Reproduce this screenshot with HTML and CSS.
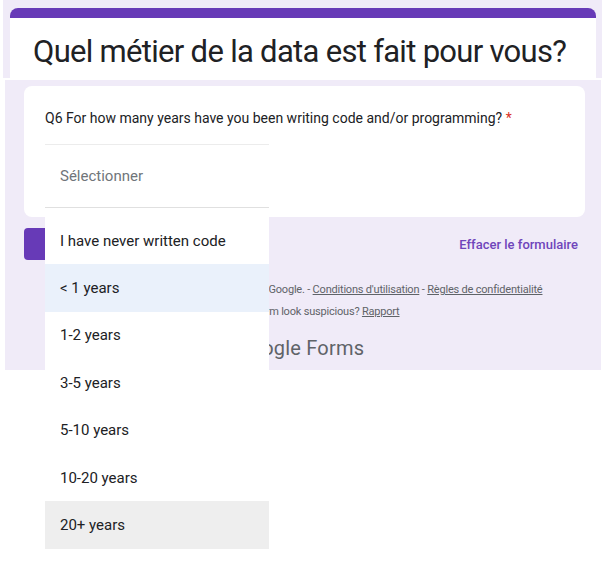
FILE: index.html
```html
<!DOCTYPE html>
<html lang="fr">
<head>
<meta charset="utf-8">
<title>Quel métier de la data est fait pour vous?</title>
<link rel="stylesheet" href="styles.css">
</head>
<body>
<div class="shot">
  <header class="head">
    <div class="title-card">
      <h1 class="title">Quel métier de la data est fait pour vous?</h1>
    </div>
  </header>
  <main class="main">
    <section class="q-card">
      <p class="q-text">Q6 For how many years have you been writing code and/or programming? <span class="req">*</span></p>
    </section>
    <div class="actions">
      <button class="submit" type="button">Envoyer</button>
      <a class="clear">Effacer le formulaire</a>
    </div>
    <footer class="foot">
      <p class="foot-line">Ce contenu n'est ni rédigé, ni cautionné par Google. - <a>Conditions d'utilisation</a> - <a>Règles de confidentialité</a></p>
      <p class="foot-line">Does this form look suspicious? <a>Rapport</a></p>
      <p class="logo">Google Forms</p>
    </footer>
    <div class="dropdown">
      <div class="select-field">Sélectionner</div>
      <ul class="menu">
        <li class="opt">I have never written code</li>
        <li class="opt opt-hover">&lt; 1 years</li>
        <li class="opt">1-2 years</li>
        <li class="opt">3-5 years</li>
        <li class="opt">5-10 years</li>
        <li class="opt">10-20 years</li>
        <li class="opt opt-sel">20+ years</li>
      </ul>
    </div>
  </main>
</div>
</body>
</html>
```
FILE: styles.css
```css
* { box-sizing: border-box; }
html, body { margin: 0; padding: 0; background: #ffffff; }
body { font-family: Roboto, "Liberation Sans", sans-serif; color: #202124; }

.shot { width: 605px; height: 569px; }

.head {
  margin-left: 3px;
  width: 599px;
  height: 78px;
  background: #f0ebf8;
  padding: 8px 6px 0 7px;
}
.title-card {
  height: 70px;
  background: #ffffff;
  border-top: 10px solid #673ab7;
  border-radius: 8px 8px 0 0;
  padding: 16px 0 0 23px;
}
.title {
  margin: 0;
  font-weight: 400;
  font-size: 31px;
  line-height: 36px;
  letter-spacing: -0.7px;
  color: #202124;
  white-space: nowrap;
}

.main {
  position: relative;
  margin-top: 2px;
  margin-left: 5px;
  width: 596px;
  height: 290px;
  background: #f0ebf8;
  padding: 6px 16px 0 19px;
}
.q-card {
  background: #ffffff;
  border-radius: 8px;
  height: 131px;
  padding: 23px 0 0 21px;
}
.q-text {
  margin: 0;
  font-size: 14px;
  line-height: 18px;
  color: #202124;
}
.req { color: #d93025; }

.actions {
  display: flex;
  justify-content: space-between;
  align-items: center;
  margin-top: 11px;
  height: 32px;
}
.submit {
  width: 96px;
  height: 32px;
  border: 0;
  border-radius: 4px;
  background: #673ab7;
  color: #ffffff;
  padding: 0 0 0 30px;
  text-align: left;
  font: 500 14px Roboto, sans-serif;
}
.clear {
  font-size: 13px;
  font-weight: 500;
  color: #6f45bb;
  padding-right: 7px;
}

.foot {
  margin-top: 22px;
  text-align: center;
  color: #5f6368;
}
.foot-line {
  margin: 0 0 6px;
  font-size: 11px;
  line-height: 16px;
  letter-spacing: -0.2px;
}
.foot-line a { color: #5f6368; text-decoration: underline; }
.logo {
  margin: 16px 0 0;
  padding-right: 8px;
  font-size: 20px;
  line-height: 24px;
  letter-spacing: 0.2px;
  color: #5f6368;
}

.dropdown {
  position: absolute;
  left: 40px;
  top: 64px;
  width: 224px;
  background: #ffffff;
}
.select-field {
  height: 64px;
  border-top: 1px solid #ececec;
  border-bottom: 1px solid #e0e0e0;
  padding-left: 15px;
  display: flex;
  align-items: center;
  font-size: 15px;
  color: #70757a;
}
.menu {
  list-style: none;
  margin: 0;
  padding: 9px 0 0;
}
.opt {
  height: 47.4px;
  display: flex;
  align-items: center;
  padding-left: 15px;
  font-size: 15px;
  color: #202124;
}
.opt-hover { background: #eaf1fb; }
.opt-sel { background: #eeeeee; }
```
